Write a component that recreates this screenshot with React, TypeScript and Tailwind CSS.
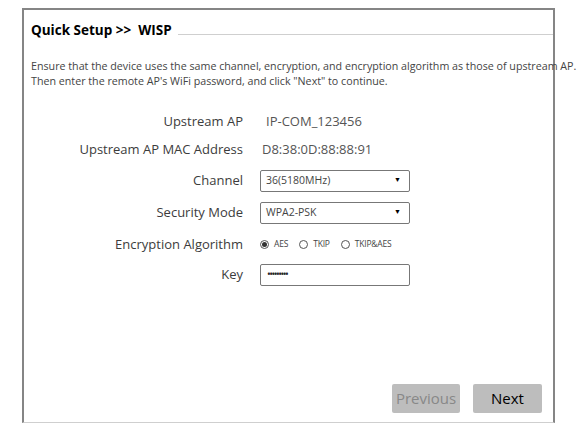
import { useState } from 'react';

const font = { fontFamily: '"Open Sans", "Noto Sans", sans-serif' };

function Row({ label, className, children }: { label: string; className?: string; children: React.ReactNode }) {
  return (
    <div className={`flex items-center h-[22px] ${className ?? ''}`}>
      <div className="w-[229px] pr-[17px] text-right text-[13px] text-[#3c3c3c] whitespace-nowrap">{label}</div>
      <div className="flex items-center">{children}</div>
    </div>
  );
}

function Select({ value }: { value: string }) {
  return (
    <div className="w-[150px] h-[22px] border border-[#777] rounded-[2px] flex items-center justify-between pl-[5px] pr-[8px] text-[10.5px] text-[#444]">
      <span>{value}</span>
      <span className="text-[7px] text-black">▼</span>
    </div>
  );
}

function Radio({ checked, label }: { checked?: boolean; label: string }) {
  return (
    <label className="flex items-center gap-[5px] text-[8.5px] text-[#444] mr-[11px] tracking-[-0.2px]">
      <span className="w-[9px] h-[9px] rounded-full border border-[#555] flex items-center justify-center">
        {checked && <span className="w-[5px] h-[5px] rounded-full bg-[#333]" />}
      </span>
      {label}
    </label>
  );
}

export default function App() {
  const [algo] = useState('AES');

  return (
    <div className="w-[582px] h-[423px] bg-white overflow-hidden pl-[22px] pt-[8px]" style={font}>
      <div className="w-[533px] h-[415px] border-2 border-b border-[#858585] border-b-[#cfcfcf] pl-[7px] pt-[14px] flex flex-col">
        <div className="flex items-center">
          <h1 className="text-[13.5px] font-bold text-black leading-none">Quick Setup &gt;&gt;&nbsp; WISP</h1>
          <div className="flex-1 h-px bg-[#cfcfcf] ml-[6px] mt-[7px]" />
        </div>

        <p className="mt-[21px] text-[10.7px] leading-[15px] text-[#444] whitespace-nowrap">
          Ensure that the device uses the same channel, encryption, and encryption algorithm as those of upstream AP.
          <br />
          Then enter the remote AP's WiFi password, and click "Next" to continue.
        </p>

        <div className="mt-[22px] flex flex-col">
          <Row label="Upstream AP">
            <span className="text-[13px] text-[#555] pl-[6px]">IP-COM_123456</span>
          </Row>
          <Row label="Upstream AP MAC Address" className="mt-[6px]">
            <span className="text-[13px] text-[#555] pl-[2px]">D8:38:0D:88:88:91</span>
          </Row>
          <Row label="Channel" className="mt-[9px]">
            <Select value="36(5180MHz)" />
          </Row>
          <Row label="Security Mode" className="mt-[10px]">
            <Select value="WPA2-PSK" />
          </Row>
          <Row label="Encryption Algorithm" className="mt-[10px]">
            <div className="flex items-center">
              <Radio checked={algo === 'AES'} label="AES" />
              <Radio checked={algo === 'TKIP'} label="TKIP" />
              <Radio checked={algo === 'TKIP&AES'} label="TKIP&AES" />
            </div>
          </Row>
          <Row label="Key" className="mt-[8px]">
            <div className="w-[150px] h-[22px] border border-[#777] rounded-[2px] flex items-center pl-[6px] text-[10px] text-[#222] tracking-[-1.5px]">
              •••••••••
            </div>
          </Row>
        </div>

        <div className="mt-auto mb-[9px] flex justify-end gap-[13px] pr-[11px]">
          <button className="w-[68px] h-[29px] bg-[#bdbdbd] rounded-[2px] text-[15px] text-[#888]">Previous</button>
          <button className="w-[69px] h-[29px] bg-[#bdbdbd] rounded-[2px] text-[15px] text-black">Next</button>
        </div>
      </div>
    </div>
  );
}
